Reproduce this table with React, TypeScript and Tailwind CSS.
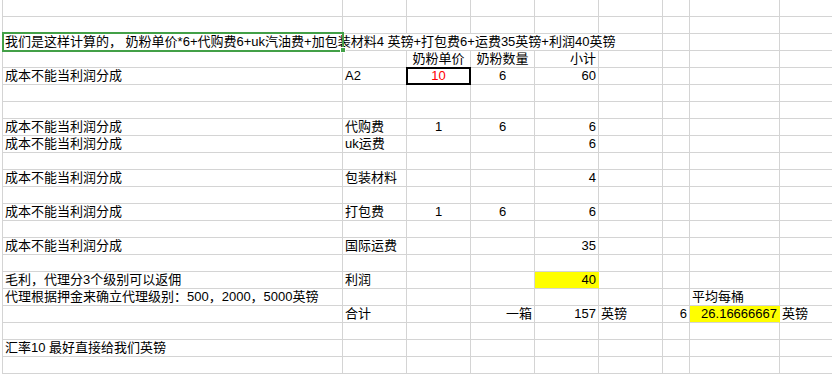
import React from "react";

type Align = "l" | "c" | "r";

type CellDef = {
  t?: string;
  a?: Align;
  red?: boolean;
  yellow?: boolean;
  boxed?: boolean;
  span6?: boolean;
};

const alignCls: Record<Align, string> = {
  l: "justify-start",
  c: "justify-center",
  r: "justify-end",
};

const E: CellDef = {};
const A = (t: string): CellDef => ({ t, a: "l" });

// 9 columns: A..I
const rows: CellDef[][] = [
  [E, E, E, E, E, E, E, E, E],
  [E, E, E, E, E, E, E, E, E],
  [
    {
      t: "我们是这样计算的， 奶粉单价*6+代购费6+uk汽油费+加包装材料4 英镑+打包费6+运费35英镑+利润40英镑",
      a: "l",
      span6: true,
    },
    E,
    E,
    E,
  ],
  [E, E, { t: "奶粉单价", a: "c" }, { t: "奶粉数量", a: "c" }, { t: "小计", a: "r" }, E, E, E, E],
  [A("成本不能当利润分成"), A("A2"), { t: "10", a: "c", red: true, boxed: true }, { t: "6", a: "c" }, { t: "60", a: "r" }, E, E, E, E],
  [E, E, E, E, E, E, E, E, E],
  [E, E, E, E, E, E, E, E, E],
  [A("成本不能当利润分成"), A("代购费"), { t: "1", a: "c" }, { t: "6", a: "c" }, { t: "6", a: "r" }, E, E, E, E],
  [A("成本不能当利润分成"), A("uk运费"), E, E, { t: "6", a: "r" }, E, E, E, E],
  [E, E, E, E, E, E, E, E, E],
  [A("成本不能当利润分成"), A("包装材料"), E, E, { t: "4", a: "r" }, E, E, E, E],
  [E, E, E, E, E, E, E, E, E],
  [A("成本不能当利润分成"), A("打包费"), { t: "1", a: "c" }, { t: "6", a: "c" }, { t: "6", a: "r" }, E, E, E, E],
  [E, E, E, E, E, E, E, E, E],
  [A("成本不能当利润分成"), A("国际运费"), E, E, { t: "35", a: "r" }, E, E, E, E],
  [E, E, E, E, E, E, E, E, E],
  [A("毛利，代理分3个级别可以返佣"), A("利润"), E, E, { t: "40", a: "r", yellow: true }, E, E, E, E],
  [A("代理根据押金来确立代理级别：500，2000，5000英镑"), E, E, E, E, E, E, A("平均每桶"), E],
  [
    E,
    A("合计"),
    E,
    { t: "一箱", a: "r" },
    { t: "157", a: "r" },
    A("英镑"),
    { t: "6", a: "r" },
    { t: "26.16666667", a: "r", yellow: true },
    A("英镑"),
  ],
  [E, E, E, E, E, E, E, E, E],
  [A("汇率10 最好直接给我们英镑"), E, E, E, E, E, E, E, E],
  [E, E, E, E, E, E, E, E, E],
];

const Cell = ({ c }: { c: CellDef }) => {
  const base = "relative flex items-end h-[17px] border-r border-b px-[2px] whitespace-nowrap";
  const border = c.yellow ? "border-r-[#ffff00] border-b-[#d4d4d4] bg-[#ffff00]" : "border-[#d4d4d4]";
  const span = c.span6 ? "col-span-6 overflow-visible" : "";
  return (
    <div className={`${base} ${border} ${span} ${alignCls[c.a ?? "l"]}`}>
      {c.t && (
        <span className={`leading-[16px] ${c.red ? "text-[#ff0000]" : "text-black"}`}>{c.t}</span>
      )}
      {c.boxed && (
        <span className="absolute left-[-1px] top-[-1px] right-[-1px] bottom-[-1px] border-2 border-black" />
      )}
    </div>
  );
};

export default function App() {
  return (
    <div className="w-[832px] h-[375px] overflow-hidden bg-white font-['Liberation_Sans','Noto_Sans_CJK_SC',sans-serif] text-[13px]">
      <div className="relative ml-[2px] border-l border-[#d4d4d4] w-[900px]">
        <div className="grid grid-cols-[340px_64px_64px_64px_64px_64px_27px_90px_64px]">
          {rows.map((r, i) => r.map((c, j) => <Cell key={`${i}-${j}`} c={c} />))}
        </div>

        {/* selection on A3 */}
        <div className="absolute left-[-1px] top-[32px] w-[342px] h-[20px] border-2 border-[#43a047] pointer-events-none" />
        <div className="absolute left-[337px] top-[47px] w-[6px] h-[6px] bg-[#43a047] border border-white" />
      </div>
    </div>
  );
}
